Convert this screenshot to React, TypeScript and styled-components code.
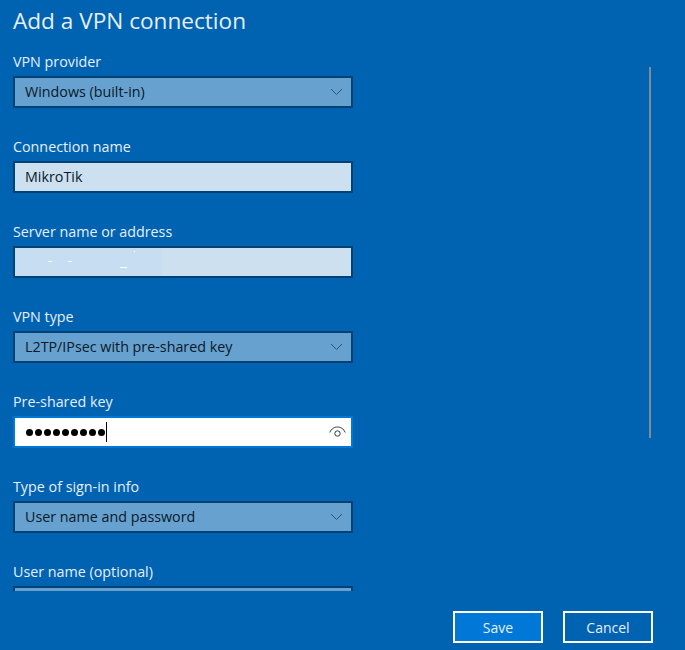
import styled, { createGlobalStyle } from 'styled-components'

const GlobalStyle = createGlobalStyle`
    html, body {
        margin: 0;
        padding: 0;
        background: #0063b1;
    }
`

const Page = styled.div`
    width: 685px;
    height: 650px;
    display: flex;
    flex-direction: column;
    overflow: hidden;
    background: #0063b1;
    color: #ffffff;
    font-family: "Open Sans", "Noto Sans", sans-serif;
`

const Title = styled.h1`
    margin: 0;
    padding: 0 0 0 13px;
    height: 43px;
    line-height: 41px;
    font-size: 22.6px;
    font-weight: 400;
    color: #e6eff7;
`

const Body = styled.div`
    height: 548px;
    display: flex;
    justify-content: space-between;
    padding: 0 34px 0 13px;
`

const Form = styled.div`
    width: 340px;
    height: 548px;
    overflow: hidden;
    display: flex;
    flex-direction: column;
    gap: 20px;
    flex-shrink: 0;
`

const Field = styled.div`
    height: 65px;
    flex-shrink: 0;
`

const Label = styled.div`
    height: 33px;
    line-height: 38px;
    font-size: 14.3px;
    color: #e6eff7;
`

const Control = styled.div<{ $kind: 'select' | 'text' | 'focus' }>`
    position: relative;
    box-sizing: border-box;
    height: 32px;
    display: flex;
    align-items: center;
    justify-content: space-between;
    padding: 0 ${p => (p.$kind === 'focus' ? 5 : 8)}px 0 10px;
    border: 2px solid ${p => (p.$kind === 'focus' ? '#0078d7' : '#004275')};
    background: ${p => (p.$kind === 'select' ? '#66a1d0' : p.$kind === 'focus' ? '#ffffff' : '#cce0f0')};
    color: #0a1a28;
    font-size: 14.3px;
    line-height: 26px;
    white-space: nowrap;
`

const Redaction = styled.div`
    position: absolute;
    left: 0;
    top: 0;
    bottom: 0;
    width: 147px;
    background: #c6ddf2;
`

const Speck = styled.span<{ $x: number; $y: number; $w: number }>`
    position: absolute;
    left: ${p => p.$x}px;
    top: ${p => p.$y}px;
    width: ${p => p.$w}px;
    height: 1px;
    background: #ffffff;
`

const Dots = styled.div`
    display: flex;
    align-items: center;
    gap: 2px;
    margin-left: 1px;
`

const Dot = styled.span`
    width: 7px;
    height: 7px;
    border-radius: 50%;
    background: #000000;
`

const Caret = styled.span`
    width: 1px;
    height: 20px;
    margin-left: -1px;
    background: #000000;
`

const Scrollbar = styled.div`
    width: 2px;
    height: 371px;
    margin-top: 24px;
    background: #7f8c96;
    flex-shrink: 0;
`

const Footer = styled.div`
    flex: 1;
    display: flex;
    justify-content: flex-end;
    gap: 20px;
    padding: 20px 32px 0 0;
`

const Button = styled.button<{ $primary?: boolean }>`
    box-sizing: border-box;
    width: 90px;
    height: 32px;
    padding: 0;
    border: 2px solid #ffffff;
    background: ${p => (p.$primary ? '#0078d7' : '#0063b1')};
    color: #e6eff7;
    font-family: inherit;
    font-size: 14px;
`

const Chevron = () => (
    <svg width="13" height="8" viewBox="0 0 13 8" fill="none" stroke="#2f5573" strokeWidth="1">
        <path d="M1 1l5.5 5.5L12 1" />
    </svg>
)

const Eye = () => (
    <svg width="17" height="12" viewBox="0 0 17 12" fill="none" stroke="#2b3a46" strokeWidth="1">
        <path d="M.8 6.5C2.5 2.5 5.5 1 8.5 1s6 1.5 7.7 5.5" />
        <circle cx="8.5" cy="7.5" r="2.7" />
    </svg>
)

const specks = [
    { x: 33, y: 13, w: 4 },
    { x: 53, y: 13, w: 4 },
    { x: 105, y: 19, w: 7 },
    { x: 119, y: 3, w: 1 },
]

export default function App() {
    return <Page>
        <GlobalStyle />
        <Title>Add a VPN connection</Title>
        <Body>
            <Form>
                <Field>
                    <Label>VPN provider</Label>
                    <Control $kind="select">Windows (built-in)<Chevron /></Control>
                </Field>
                <Field>
                    <Label>Connection name</Label>
                    <Control $kind="text">MikroTik</Control>
                </Field>
                <Field>
                    <Label>Server name or address</Label>
                    <Control $kind="text">
                        <Redaction>
                            {specks.map(s => <Speck key={s.x} $x={s.x} $y={s.y} $w={s.w} />)}
                        </Redaction>
                    </Control>
                </Field>
                <Field>
                    <Label>VPN type</Label>
                    <Control $kind="select">L2TP/IPsec with pre-shared key<Chevron /></Control>
                </Field>
                <Field>
                    <Label>Pre-shared key</Label>
                    <Control $kind="focus">
                        <Dots>
                            {Array.from({ length: 9 }, (_, i) => <Dot key={i} />)}
                            <Caret />
                        </Dots>
                        <Eye />
                    </Control>
                </Field>
                <Field>
                    <Label>Type of sign-in info</Label>
                    <Control $kind="select">User name and password<Chevron /></Control>
                </Field>
                <Field>
                    <Label>User name (optional)</Label>
                    <Control $kind="select" />
                </Field>
            </Form>
            <Scrollbar />
        </Body>
        <Footer>
            <Button $primary>Save</Button>
            <Button>Cancel</Button>
        </Footer>
    </Page>
}
